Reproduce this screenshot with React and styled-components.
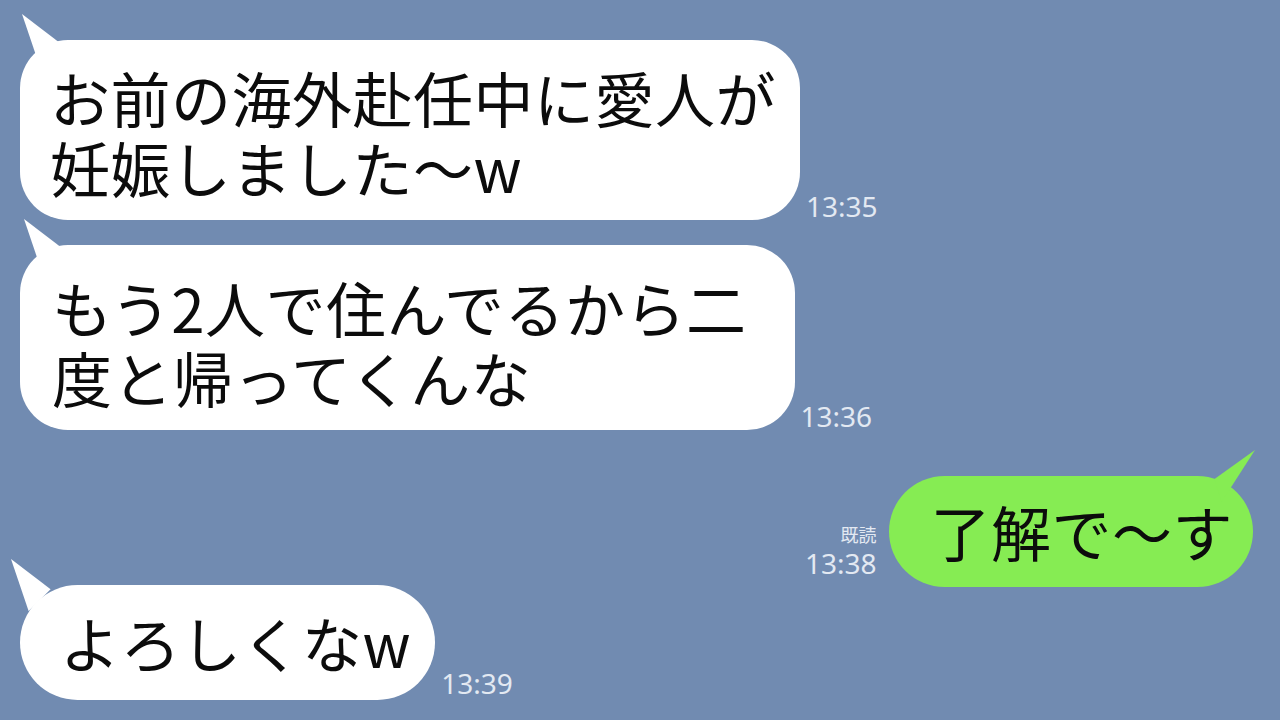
import React from 'react';
import styled, { createGlobalStyle } from 'styled-components';

const GlobalStyle = createGlobalStyle`
	html, body {
		margin: 0;
		padding: 0;
		background: #718bb1;
	}
	body {
		width: 1280px;
		height: 720px;
		overflow: hidden;
		font-family: "Noto Sans CJK JP", "Noto Sans", sans-serif;
	}
`

const Screen = styled.div`
	display: flex;
	flex-direction: column;
	width: 1280px;
	height: 720px;
	padding: 40px 27px 0 20px;
	box-sizing: border-box;
	background: #718bb1;
`

const Row = styled.div`
	display: flex;
	align-items: flex-end;
	justify-content: ${props => props.$mine ? 'flex-end' : 'flex-start'};
	margin-top: ${props => props.$top || 0}px;
	gap: ${props => props.$mine ? 12 : 6}px;
`

const Bubble = styled.div`
	position: relative;
	background: ${props => props.$mine ? '#86ec53' : '#ffffff'};
	color: #0c0c0c;
	font-size: 60px;
	letter-spacing: 0.5px;
	line-height: 70px;
	white-space: nowrap;
	padding: ${props => props.$pad};
	border-radius: ${props => props.$round}px;

	&::before {
		content: '';
		position: absolute;
		width: 44px;
		height: 52px;
		top: -26px;
		background: inherit;
		${props => props.$mine ? `
			right: -2px;
			clip-path: polygon(100% 0, 24% 100%, 8% 56%);
		` : `
			left: ${props.$tailX || 0}px;
			clip-path: polygon(0 0, 90% 58%, 40% 100%);
		`}
	}
`

const Meta = styled.div`
	display: flex;
	flex-direction: column;
	align-items: flex-end;
	color: #e3e9f2;
	font-family: "Noto Sans", "Noto Sans CJK JP", sans-serif;
	padding-bottom: ${props => props.$bottom || 0}px;
`

const Read = styled.span`
	font-family: "Noto Sans CJK JP", sans-serif;
	font-size: 18px;
	line-height: 22px;
	margin-bottom: 4px;
`

const Time = styled.span`
	font-size: 28px;
	line-height: 28px;
`

export default function App() {
	return (
		<Screen>
			<GlobalStyle />
			<Row $top={0}>
				<Bubble $pad="22px 24px 18px 30px" $round={48} $tailX={2}>
					お前の海外赴任中に愛人が<br />妊娠しました〜w
				</Bubble>
				<Meta $bottom={0}><Time>13:35</Time></Meta>
			</Row>
			<Row $top={25}>
				<Bubble $pad="27px 48px 18px 32px" $round={48} $tailX={4}>
					もう2人で住んでるから二<br />度と帰ってくんな
				</Bubble>
				<Meta $bottom={0}><Time>13:36</Time></Meta>
			</Row>
			<Row $mine $top={46}>
				<Meta $bottom={10}>
					<Read>既読</Read>
					<Time>13:38</Time>
				</Meta>
				<Bubble $mine $pad="20px 20px 21px 42px" $round={56}>
					了解で〜す
				</Bubble>
			</Row>
			<Row $top={-2}>
				<Bubble $pad="22px 24px 23px 40px" $round={58} $tailX={-9}>
					よろしくなw
				</Bubble>
				<Meta $bottom={3}><Time>13:39</Time></Meta>
			</Row>
		</Screen>
	);
}
